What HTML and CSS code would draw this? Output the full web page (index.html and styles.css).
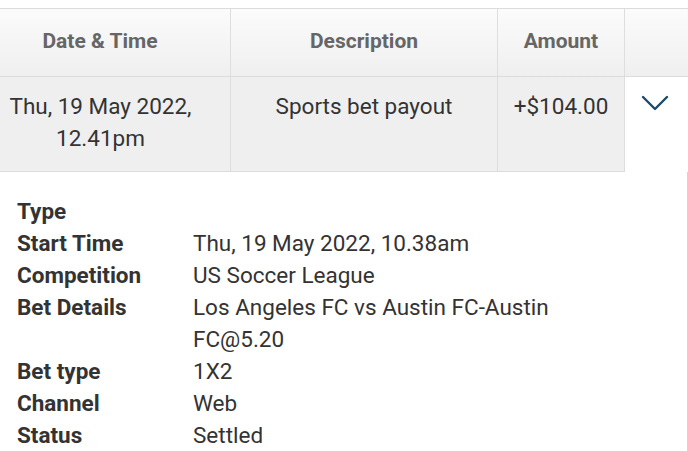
FILE: index.html
```html
<!DOCTYPE html>
<html lang="en">
<head>
  <meta charset="UTF-8" />
  <meta name="viewport" content="width=device-width, initial-scale=1.0"/>
  <title>Transaction History</title>
  <link rel="stylesheet" href="styles.css">
</head>
<body>
  <div class="history">
    <table class="tx-table">
      <thead>
        <tr>
          <th class="col-date">Date &amp; Time</th>
          <th class="col-desc">Description</th>
          <th class="col-amount">Amount</th>
          <th class="col-toggle"></th>
        </tr>
      </thead>
      <tbody>
        <tr class="tx-row">
          <td class="date">Thu, 19 May 2022,<br>12.41pm</td>
          <td>Sports bet payout</td>
          <td>+$104.00</td>
          <td class="toggle">
            <svg width="28" height="16" viewBox="0 0 28 16">
              <polyline points="2,2 14,14 26,2" fill="none" stroke="#1e4a68" stroke-width="2.4" stroke-linecap="round" stroke-linejoin="round"/>
            </svg>
          </td>
        </tr>
      </tbody>
    </table>

    <dl class="details">
      <dt>Type</dt><dd></dd>
      <dt>Start Time</dt><dd>Thu, 19 May 2022, 10.38am</dd>
      <dt>Competition</dt><dd>US Soccer League</dd>
      <dt>Bet Details</dt><dd>Los Angeles FC vs Austin FC-Austin FC@5.20</dd>
      <dt>Bet type</dt><dd>1X2</dd>
      <dt>Channel</dt><dd>Web</dd>
      <dt>Status</dt><dd>Settled</dd>
    </dl>
  </div>
</body>
</html>
```

FILE: styles.css
```css
body {
  margin: 0;
  font-family: Roboto, "Noto Sans", sans-serif;
  background: #fff;
  color: #333;
}

.history {
  margin-top: 8px;
  width: 687px;
  border-top: 1px solid #dcdcdc;
  border-right: 1px solid #d4d4d4;
  min-height: 460px;
}

.tx-table {
  border-collapse: collapse;
  table-layout: fixed;
  width: 686px;
}

.tx-table th {
  height: 63px;
  padding: 0 0 4px;
  font-size: 21px;
  font-weight: bold;
  color: #666;
  background: linear-gradient(#fbfbfb, #efefef);
  border-left: 1px solid #dedede;
  border-bottom: 1px solid #dcdcdc;
}

.tx-table th:first-child {
  border-left: none;
}

.tx-table .col-date,
.tx-row .date {
  padding-right: 30px;
}

.col-date { width: 200px; }
.col-desc { width: 266px; }
.col-amount { width: 126px; }
.col-toggle { width: 64px; }

.tx-row td {
  height: 95px;
  padding-top: 13px;
  box-sizing: border-box;
  vertical-align: top;
  text-align: center;
  font-size: 22.5px;
  line-height: 32px;
  color: #333;
  background: #efefef;
  border-left: 1px solid #dedede;
  border-bottom: 1px solid #dcdcdc;
}

.tx-row td:first-child {
  border-left: none;
}

.tx-row td.toggle {
  background: #fff;
  border-bottom: none;
  padding: 10px 4px 0 0;
}

.details {
  display: grid;
  grid-template-columns: 176px 370px;
  margin: 0;
  padding: 23px 0 0 17px;
  font-size: 22.5px;
  line-height: 32px;
}

.details dt {
  font-weight: bold;
  color: #333;
}

.details dd {
  margin: 0;
  color: #333;
}
```
